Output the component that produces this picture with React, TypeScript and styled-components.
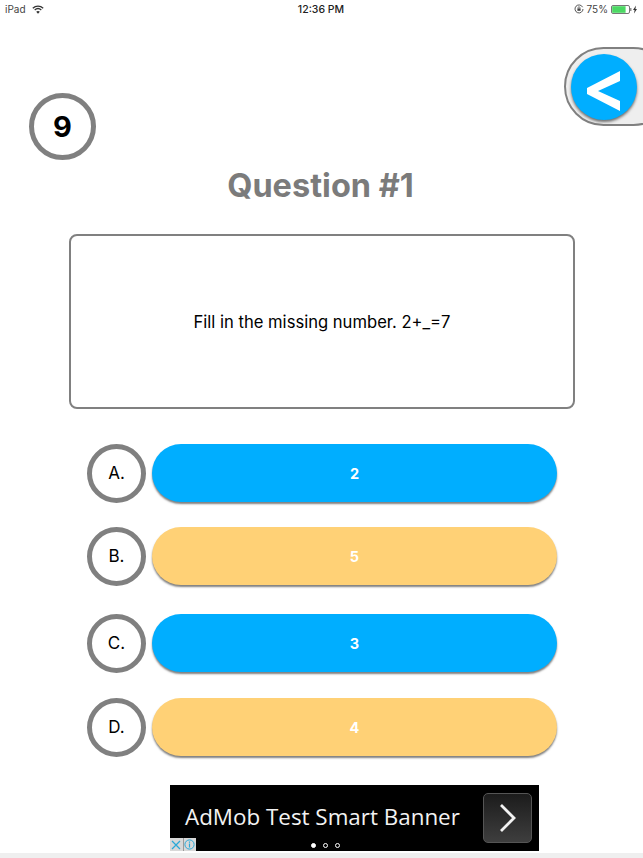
import styled, { createGlobalStyle } from "styled-components";

const GlobalStyle = createGlobalStyle`
  html, body {
    margin: 0;
    padding: 0;
    background: #fff;
  }
  body {
    font-family: Inter, "Liberation Sans", sans-serif;
  }
`;

const Page = styled.div`
  position: relative;
  width: 643px;
  height: 858px;
  overflow: hidden;
  display: flex;
  flex-direction: column;
  background: #fff;
`;

const StatusBar = styled.div`
  height: 18px;
  padding: 0 6px 0 5px;
  display: grid;
  grid-template-columns: 1fr auto 1fr;
  align-items: center;
  font-size: 10px;
  color: #222;
`;

const StatusLeft = styled.div`
  display: flex;
  align-items: center;
  gap: 6px;
  color: #444;
`;

const StatusTime = styled.div`
  font-weight: 500;
  font-size: 10.5px;
`;

const StatusRight = styled.div`
  display: flex;
  align-items: center;
  justify-content: flex-end;
  gap: 3px;
  color: #444;
`;

const BackPill = styled.div`
  position: absolute;
  top: 47px;
  left: 564px;
  width: 100px;
  height: 75px;
  padding: 0 0 0 5px;
  display: flex;
  align-items: center;
  border: 2px solid #808080;
  border-radius: 40px;
  background: #eeeeee;
`;

const BackCircle = styled.button`
  width: 66px;
  height: 66px;
  padding: 8px 0 0;
  border: none;
  border-radius: 50%;
  background: #00aeff;
  box-shadow: 0 2px 3px rgba(0, 0, 0, 0.55);
  display: flex;
  align-items: center;
  justify-content: center;
`;

const Timer = styled.div`
  width: 57px;
  height: 57px;
  margin: 75px 0 0 29px;
  border: 5px solid #808080;
  border-radius: 50%;
  display: flex;
  align-items: center;
  justify-content: center;
  font-size: 29px;
  font-weight: 700;
  color: #000;
`;

const Title = styled.h1`
  margin: 6px 0 0;
  text-align: center;
  font-size: 32.5px;
  line-height: 40px;
  font-weight: 700;
  color: #7b7b7b;
  transform: translateX(-1px);
`;

const QuestionBox = styled.div`
  width: 502px;
  height: 171px;
  margin: 28px 0 0 69px;
  border: 2px solid #808080;
  border-radius: 8px;
  display: flex;
  align-items: center;
  justify-content: center;
  font-size: 16.6px;
  color: #000;
`;

const Answers = styled.div`
  display: flex;
  flex-direction: column;
  margin: 35px 0 0 87px;
`;

const AnswerRow = styled.div<{ $gap: number }>`
  display: flex;
  align-items: center;
  gap: 6px;
  height: 58px;
  margin-bottom: ${(props) => props.$gap}px;
`;

const Letter = styled.div`
  box-sizing: border-box;
  width: 59px;
  height: 59px;
  border: 5px solid #808080;
  border-radius: 50%;
  display: flex;
  align-items: center;
  justify-content: center;
  font-size: 17px;
  color: #000;
`;

const AnswerButton = styled.button<{ $color: string }>`
  width: 405px;
  height: 58px;
  padding: 0;
  border: none;
  border-radius: 29px;
  background: ${(props) => props.$color};
  box-shadow: 0 2px 2px rgba(0, 0, 0, 0.5);
  font-family: inherit;
  font-size: 14.5px;
  font-weight: 700;
  color: #fff;
`;

const AdBanner = styled.div`
  position: relative;
  width: 369px;
  height: 66px;
  margin: 29px 0 0 170px;
  padding: 0 7px 0 15px;
  box-sizing: border-box;
  background: #000;
  display: flex;
  align-items: center;
  justify-content: space-between;
`;

const AdText = styled.span`
  font-family: "Open Sans", sans-serif;
  font-size: 22.4px;
  color: #f2f2f2;
  margin-top: -4px;
`;

const AdArrow = styled.div`
  box-sizing: border-box;
  width: 49px;
  height: 50px;
  border: 1px solid #555;
  border-radius: 5px;
  background: linear-gradient(#1c1c1c, #3e3e3e);
  display: flex;
  align-items: center;
  justify-content: center;
`;

const AdChoices = styled.div`
  position: absolute;
  left: 0;
  bottom: 0;
  display: flex;
  gap: 1px;
  background: #9a9a9a;
`;

const AdChoice = styled.div`
  width: 12.5px;
  height: 13px;
  background: #d8d8d8;
  display: flex;
  align-items: center;
  justify-content: center;
`;

const AdDots = styled.div`
  position: absolute;
  left: 141px;
  bottom: 3px;
  display: flex;
  gap: 7px;
`;

const AdDot = styled.span<{ $active?: boolean }>`
  box-sizing: border-box;
  width: 5px;
  height: 5px;
  border-radius: 50%;
  border: 1px solid #fff;
  background: ${(props) => (props.$active ? "#fff" : "transparent")};
`;

const BottomStrip = styled.div`
  margin-top: auto;
  height: 5px;
  background: #efefef;
`;

const answers = [
  { letter: "A.", value: "2", color: "#00aeff", gap: 25 },
  { letter: "B.", value: "5", color: "#ffd176", gap: 29 },
  { letter: "C.", value: "3", color: "#00aeff", gap: 26 },
  { letter: "D.", value: "4", color: "#ffd176", gap: 0 },
];

const Wifi = () => (
  <svg width="12" height="9" viewBox="0 0 12 9" fill="none" stroke="#333">
    <path d="M0.8 3.2C3.8 0.4 8.2 0.4 11.2 3.2" strokeWidth="1.3" />
    <path d="M2.7 5C4.6 3.3 7.4 3.3 9.3 5" strokeWidth="1.3" />
    <path d="M6 8.8L4.2 6.7C5.2 5.9 6.8 5.9 7.8 6.7Z" fill="#333" stroke="none" />
  </svg>
);

const RotationLock = () => (
  <svg width="10" height="10" viewBox="0 0 10 10" fill="none" stroke="#444">
    <path d="M8.6 3.2A4 4 0 1 0 9 5" strokeWidth="0.9" />
    <rect x="3.4" y="4.4" width="3.2" height="2.4" fill="#444" stroke="none" />
    <path d="M4.1 4.4V3.6A0.9 0.9 0 0 1 5.9 3.6V4.4" strokeWidth="0.7" />
  </svg>
);

const Battery = () => (
  <svg width="26" height="9" viewBox="0 0 26 9">
    <rect x="0.5" y="0.5" width="18" height="8" rx="1.5" fill="none" stroke="#777" />
    <rect x="1.2" y="1.2" width="13.4" height="6.6" fill="#4cd964" />
    <rect x="19.2" y="3" width="1.2" height="3" fill="#777" />
    <path d="M25 0.5L22 5H23.6L23 8.5L26 4H24.4Z" fill="#333" />
  </svg>
);

const App = () => {
  return (
    <Page>
      <GlobalStyle />
      <StatusBar>
        <StatusLeft>
          iPad
          <Wifi />
        </StatusLeft>
        <StatusTime>12:36 PM</StatusTime>
        <StatusRight>
          <RotationLock />
          <span>75%</span>
          <Battery />
        </StatusRight>
      </StatusBar>

      <BackPill>
        <BackCircle>
          <svg width="36" height="42" viewBox="0 0 36 42">
            <path d="M34 1V11L12 21L34 31V41L1 24V18Z" fill="#fff" />
          </svg>
        </BackCircle>
      </BackPill>

      <Timer>9</Timer>
      <Title>Question #1</Title>
      <QuestionBox>Fill in the missing number. 2+_=7</QuestionBox>

      <Answers>
        {answers.map((answer) => (
          <AnswerRow key={answer.letter} $gap={answer.gap}>
            <Letter>{answer.letter}</Letter>
            <AnswerButton $color={answer.color}>{answer.value}</AnswerButton>
          </AnswerRow>
        ))}
      </Answers>

      <AdBanner>
        <AdText>AdMob Test Smart Banner</AdText>
        <AdArrow>
          <svg width="18" height="30" viewBox="0 0 18 30" fill="none">
            <path d="M2 2L15 15L2 28" stroke="#f2f2f2" strokeWidth="2.8" />
          </svg>
        </AdArrow>
        <AdChoices>
          <AdChoice>
            <svg width="10" height="10" viewBox="0 0 10 10">
              <path d="M1 1L9 9M9 1L1 9" stroke="#2aa9d8" strokeWidth="1.2" />
            </svg>
          </AdChoice>
          <AdChoice>
            <svg width="11" height="11" viewBox="0 0 11 11" fill="none">
              <circle cx="5.5" cy="5.5" r="4.6" stroke="#2aa9d8" />
              <path d="M5.5 4.6V8.4M5.5 2.6V3.8" stroke="#2aa9d8" strokeWidth="1.2" />
            </svg>
          </AdChoice>
        </AdChoices>
        <AdDots>
          <AdDot $active />
          <AdDot />
          <AdDot />
        </AdDots>
      </AdBanner>
      <BottomStrip />
    </Page>
  );
};

export default App;
